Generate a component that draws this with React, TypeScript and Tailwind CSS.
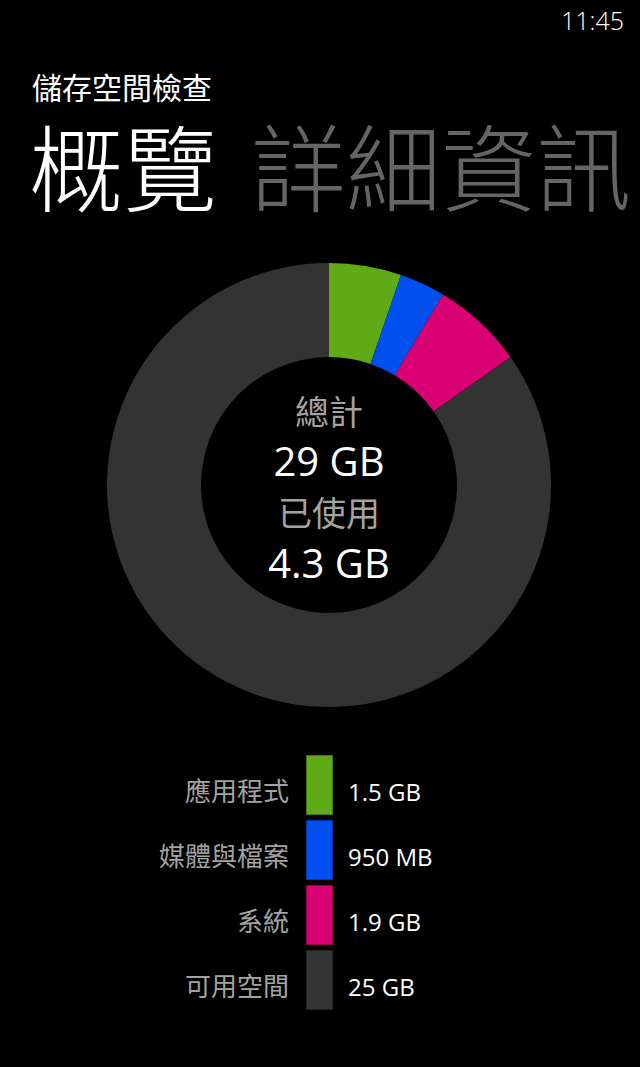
import React from 'react';

const FONT = '"Open Sans", "Noto Sans CJK TC", sans-serif';

const usage = [
  { label: '應用程式', value: '1.5 GB', size: 1.5, color: '#60a917' },
  { label: '媒體與檔案', value: '950 MB', size: 0.95, color: '#0050ef' },
  { label: '系統', value: '1.9 GB', size: 1.9, color: '#d80073' },
  { label: '可用空間', value: '25 GB', size: 24.2, color: '#333333' },
];

// Donut geometry
const R_OUT = 222;
const R_IN = 128;
const C = 222;

function point(r: number, angle: number) {
  const a = (angle - 90) * (Math.PI / 180);
  return [C + r * Math.cos(a), C + r * Math.sin(a)];
}

function slicePath(start: number, end: number) {
  const large = end - start > 180 ? 1 : 0;
  const [x1, y1] = point(R_OUT, start);
  const [x2, y2] = point(R_OUT, end);
  const [x3, y3] = point(R_IN, end);
  const [x4, y4] = point(R_IN, start);
  return `M${x1} ${y1} A${R_OUT} ${R_OUT} 0 ${large} 1 ${x2} ${y2} L${x3} ${y3} A${R_IN} ${R_IN} 0 ${large} 0 ${x4} ${y4} Z`;
}

function Donut() {
  const total = usage.reduce((s, u) => s + u.size, 0);
  let acc = 0;
  const slices = usage.map((u) => {
    const start = (acc / total) * 360;
    acc += u.size;
    const end = (acc / total) * 360;
    return { ...u, start, end: Math.min(end, 359.999) };
  });

  return (
    <div className="relative h-[444px] w-[444px]">
      <svg width="444" height="444" viewBox="0 0 444 444">
        {slices.map((s) => (
          <path key={s.label} d={slicePath(s.start, s.end)} fill={s.color} />
        ))}
      </svg>
      <div className="absolute inset-0 flex flex-col items-center justify-center pt-[4px]">
        <p className="text-[34px] leading-[48px] text-[#a3a3a3]">總計</p>
        <p className="text-[40px] leading-[50px] text-white">29 GB</p>
        <p className="text-[34px] leading-[54px] text-[#a3a3a3]">已使用</p>
        <p className="text-[40px] leading-[46px] text-white">4.3 GB</p>
      </div>
    </div>
  );
}

export default function App() {
  return (
    <div className="min-h-[1067px] w-[640px] bg-black text-white" style={{ fontFamily: FONT }}>
      {/* Status bar */}
      <div className="flex h-[44px] justify-end pr-[16px] pt-[3px]">
        <span className="text-[25px] font-light leading-[34px] text-white">11:45</span>
      </div>

      {/* Pivot header */}
      <div className="pl-[32px]">
        <p className="pt-[26px] text-[30px] leading-[36px] text-white">儲存空間檢查</p>
        <div className="ml-[-3px] mt-[12px] flex items-baseline whitespace-nowrap font-light leading-[100px]">
          <span className="text-[94px] text-white">概覽</span>
          <span className="ml-[34px] text-[95px] text-[#656565]">詳細資訊</span>
        </div>
      </div>

      {/* Chart */}
      <div className="mt-[44px] pl-[107px]">
        <Donut />
      </div>

      {/* Legend */}
      <div className="mt-[48px] grid grid-cols-[289px_27px_1fr] gap-x-[17px] gap-y-[5px]">
        {usage.map((u) => (
          <React.Fragment key={u.label}>
            <div className="flex items-center justify-end pt-[12px] text-[26px] text-[#a3a3a3]">{u.label}</div>
            <div
              className="h-[60px] w-[27px] border border-black/30"
              style={{ backgroundColor: u.color }}
            />
            <div className="ml-[-2px] flex items-center pt-[14px] text-[24px] text-white">{u.value}</div>
          </React.Fragment>
        ))}
      </div>
    </div>
  );
}
